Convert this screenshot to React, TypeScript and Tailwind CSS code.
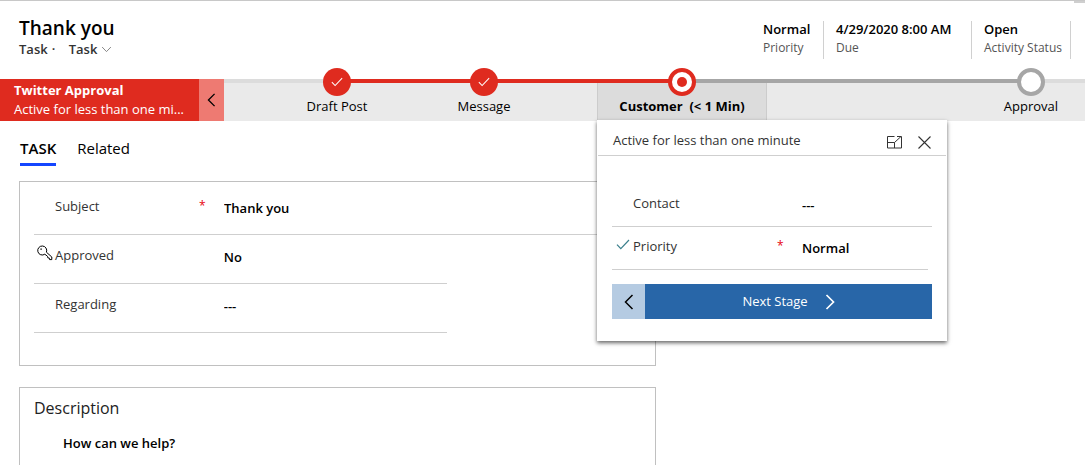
import React from "react";

type IconProps = { className?: string };

const ChevronLeft = ({ className }: IconProps) => (
  <svg viewBox="0 0 10 16" className={className} fill="none" stroke="currentColor" strokeWidth="1.5" aria-hidden="true">
    <path d="M8.500 1 1.500 8l7 7" />
  </svg>
);

const ChevronRight = ({ className }: IconProps) => (
  <svg viewBox="0 0 10 16" className={className} fill="none" stroke="currentColor" strokeWidth="1.7" aria-hidden="true">
    <path d="M1.500 1 8.500 8l-7 7" />
  </svg>
);

const ChevronDown = ({ className }: IconProps) => (
  <svg viewBox="0 0 12 8" className={className} fill="none" stroke="currentColor" strokeWidth="1" aria-hidden="true">
    <path d="M1 1.2 6 6.400l5-5.200" />
  </svg>
);

const Check = ({ className }: IconProps) => (
  <svg viewBox="0 0 14 11" className={className} fill="none" stroke="currentColor" strokeWidth="1.2" aria-hidden="true">
    <path d="M1 5.600 4.800 9.600 13 1" />
  </svg>
);

const Key = ({ className }: IconProps) => (
  <svg viewBox="0 0 16 16" className={className} fill="none" stroke="currentColor" strokeWidth="1" aria-hidden="true">
    <path d="M9.400 7.200 14.800 12v2.600h-2.200l-.3-1.500-1.500-.3-.3-1.500L7.800 9.200A4.500 4.500 0 1 1 9.400 7.200Z" />
    <path d="M3.400 3.400h1.400v1.400H3.400z" fill="currentColor" stroke="none" />
  </svg>
);

const PopOut = ({ className }: IconProps) => (
  <svg viewBox="0 0 15 13" className={className} fill="none" stroke="currentColor" strokeWidth="1" aria-hidden="true">
    <path d="M7.500.5h-7v11.500h14V5M.5 6.500h7V12M7.500 6.500l6.500-6M10 .5h4.500V5" />
  </svg>
);

const Close = ({ className }: IconProps) => (
  <svg viewBox="0 0 13 13" className={className} fill="none" stroke="currentColor" strokeWidth="1.1" aria-hidden="true">
    <path d="m.5.5 12 12m0-12-12 12" />
  </svg>
);

const summary = [
  { value: "Normal", label: "Priority", width: "min-w-[73px]" },
  { value: "4/29/2020 8:00 AM", label: "Due", width: "min-w-[148px]" },
  { value: "Open", label: "Activity Status", width: "min-w-[99px]" },
];

type StageProps = {
  name: string;
  state: "done" | "active" | "pending";
  before: string;
  after: string;
  className: string;
};

function Stage({ name, state, before, after, className }: StageProps) {
  return (
    <div className={`flex shrink-0 flex-col ${className}`}>
      <div className="flex h-1">
        <span className={`flex-1 ${before}`} />
        <span className={`flex-1 ${after}`} />
      </div>
      <button type="button" className="relative -mt-[15px] flex flex-col items-center whitespace-pre">
        {state === "done" && (
          <span className="flex size-7 items-center justify-center rounded-full bg-[#df2b1f] text-white">
            <Check className="h-[10px] w-3" />
          </span>
        )}
        {state === "active" && (
          <span className="flex size-7 items-center justify-center rounded-full border-4 border-[#df2b1f] bg-white">
            <span className="size-[10px] rounded-full bg-[#df2b1f]" />
          </span>
        )}
        {state === "pending" && <span className="size-7 rounded-full border-4 border-[#a6a6a6] bg-white" />}
        <span className={`text-[13px] leading-5 ${state === "active" ? "font-bold" : ""}`}>{name}</span>
      </button>
    </div>
  );
}

type RowProps = {
  id: string;
  label: string;
  icon?: React.ReactNode;
  required?: boolean;
  className: string;
  children: React.ReactNode;
};

function Row({ id, label, icon, required, className, children }: RowProps) {
  return (
    <div className={`flex items-start border-b border-[#cfcfcf] ${className}`}>
      <span className="flex h-4 w-[21px] shrink-0 items-center justify-center">{icon}</span>
      <label htmlFor={id} className="flex-1 text-[13px] leading-5 text-[#333]">
        {label}
      </label>
      <span className="w-[25px] shrink-0 text-xs leading-5 text-red-600">{required ? "*" : ""}</span>
      {children}
    </div>
  );
}

const valueClass =
  "mt-[2px] appearance-none bg-transparent p-0 text-[13px] leading-5 font-semibold text-black outline-none";

export default function App() {
  return (
    <div className="relative h-screen overflow-hidden border-t border-[#c8c8c8] bg-white font-['Open_Sans','Noto_Sans',sans-serif] text-black">
      <div className="absolute top-0 right-0 h-[2px] w-[11px] bg-[#cfcfcf]" />
      <header className="flex h-[78px] items-start justify-between pr-[14px] pl-[19px]">
        <div className="pt-[14px]">
          <h1 className="text-[19px] leading-[26px] font-semibold">Thank you</h1>
          <div className="flex items-center text-[13px] leading-4 font-semibold text-[#333]">
            <span>Task</span>
            <span className="w-[21px] pl-1">·</span>
            <button type="button" className="flex items-center gap-1">
              Task
              <ChevronDown className="h-[7px] w-[11px] text-[#777]" />
            </button>
          </div>
        </div>
        <dl className="flex pt-5">
          {summary.map((item) => (
            <div key={item.label} className={`flex h-[38px] flex-col border-r border-[#d0d0d0] pl-3 ${item.width}`}>
              <dd className="text-[13px] leading-4 font-semibold">{item.value}</dd>
              <dt className="pt-[3px] text-xs leading-4 text-[#555]">{item.label}</dt>
            </div>
          ))}
        </dl>
      </header>

      <nav aria-label="Process stages" className="relative flex h-[42px] bg-[#eaeaea]">
        <div className="w-[199px] shrink-0 bg-[#df2b1f] pt-[2px] pl-[14px] text-white">
          <div className="text-[13px] leading-[18px] font-bold">Twitter Approval</div>
          <div className="text-[13px] leading-5 whitespace-nowrap">Active for less than one mi...</div>
        </div>
        <button
          type="button"
          aria-label="Collapse process"
          className="flex w-[25px] shrink-0 items-center justify-center bg-[#ee7a72]"
        >
          <ChevronLeft className="h-[14px] w-[9px]" />
        </button>
        <span className="h-1 w-10 shrink-0 bg-[#dcdcdc]" />
        <Stage name="Draft Post" state="done" before="bg-[#dcdcdc]" after="bg-[#df2b1f]" className="w-[146px]" />
        <Stage name="Message" state="done" before="bg-[#df2b1f]" after="bg-[#df2b1f]" className="w-[148px]" />
        <span className="h-1 w-[39px] shrink-0 bg-[#df2b1f]" />
        <div className="relative z-10 shrink-0">
          <Stage
            name="Customer  (< 1 Min)"
            state="active"
            before="bg-[#df2b1f]"
            after="bg-[#a6a6a6]"
            className="h-[41px] w-[170px] bg-[#dcdcdc] shadow-[inset_1px_0_#cccccc,inset_-1px_0_#cccccc]"
          />
          <section
            aria-label="Stage details"
            className="absolute top-[41px] left-0 w-[350px] bg-white px-px pb-[22px] shadow-[0_2px_4px_rgba(0,0,0,0.6)]"
          >
            <div className="flex h-9 items-start border-b border-[#cfcfcf] px-[15px] text-[#333]">
              <span className="flex-1 pt-[10px] text-[13px] leading-5">Active for less than one minute</span>
              <button type="button" aria-label="Dock" className="mt-4 mr-4">
                <PopOut className="h-[13px] w-[15px]" />
              </button>
              <button type="button" aria-label="Close" className="mt-4">
                <Close className="size-[13px]" />
              </button>
            </div>
            <div className="px-[14px] pt-7">
              <Row id="contact" label="Contact" className="h-[43px] pt-[9px]">
                <input id="contact" defaultValue="---" className={`${valueClass} w-[130px]`} />
              </Row>
              <div className="pr-1">
                <Row
                  id="priority"
                  label="Priority"
                  required
                  icon={<Check className="h-[11px] w-[14px] text-[#3a7f8c]" />}
                  className="h-[43px] pt-[9px]"
                >
                  <select id="priority" className={`${valueClass} w-[126px]`}>
                    <option>Normal</option>
                  </select>
                </Row>
              </div>
              <div className="mt-[14px] flex h-[35px]">
                <button
                  type="button"
                  aria-label="Previous stage"
                  className="flex w-[33px] items-center justify-center bg-[#b5cbe2]"
                >
                  <ChevronLeft className="h-4 w-[10px]" />
                </button>
                <button
                  type="button"
                  className="flex flex-1 items-center justify-center gap-[17px] bg-[#2866a8] text-[13px] text-white"
                >
                  Next Stage
                  <ChevronRight className="h-4 w-[10px]" />
                </button>
              </div>
            </div>
          </section>
        </div>
        <span className="h-1 flex-1 bg-[#a6a6a6]" />
        <Stage name="Approval" state="pending" before="bg-[#a6a6a6]" after="bg-[#dcdcdc]" className="w-[108px]" />
      </nav>

      <main className="px-[19px]">
        <div className="flex gap-[21px] pt-4 pl-px text-[15px] leading-[22px]" role="tablist">
          <button type="button" role="tab" aria-selected="true" className="border-b-3 border-[#1446ff] pb-1 font-semibold">
            TASK
          </button>
          <button type="button" role="tab" aria-selected="false" className="self-start">
            Related
          </button>
        </div>
        <div className="mt-[15px] grid grid-cols-[637fr_410fr]">
          <div className="flex flex-col gap-[21px]">
            <section className="border border-[#c0c0c0] px-[14px] pt-1 pb-8">
              <Row id="subject" label="Subject" required className="h-[49px] pt-[10px]">
                <input id="subject" defaultValue="Thank you" className={`${valueClass} w-[417px]`} />
              </Row>
              <div className="w-[68%]">
                <Row
                  id="approved"
                  label="Approved"
                  icon={<Key className="h-4 w-4" />}
                  className="h-[49px] pt-[10px]"
                >
                  <select id="approved" className={`${valueClass} w-[223px]`}>
                    <option>No</option>
                  </select>
                </Row>
                <Row id="regarding" label="Regarding" className="h-[49px] pt-[10px]">
                  <input id="regarding" defaultValue="---" className={`${valueClass} w-[223px]`} />
                </Row>
              </div>
            </section>
            <section className="border border-[#c0c0c0] px-[14px] pt-[9px]">
              <label htmlFor="description" className="block text-base leading-[22px] text-[#222]">
                Description
              </label>
              <textarea
                id="description"
                defaultValue="How can we help?"
                className="mt-[14px] block h-20 w-full resize-none bg-transparent pl-[29px] text-[13px] leading-5 font-semibold text-black outline-none"
              />
            </section>
          </div>
        </div>
      </main>
    </div>
  );
}
